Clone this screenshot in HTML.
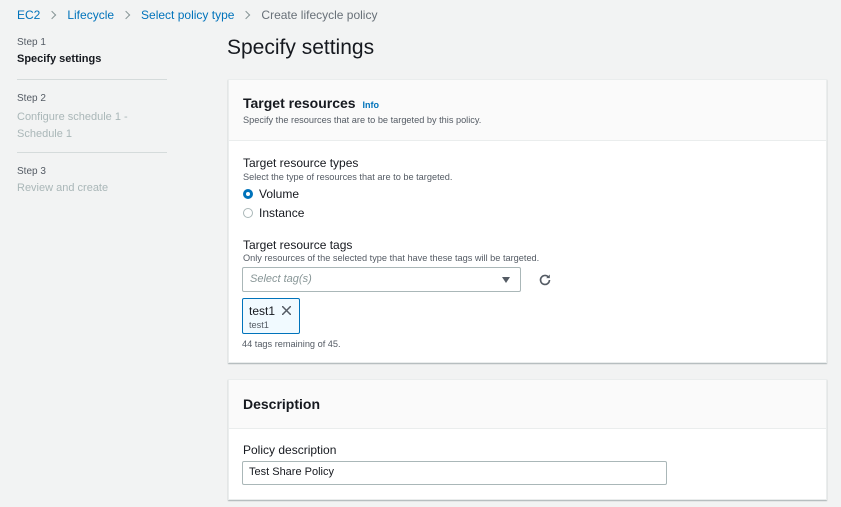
<!DOCTYPE html>
<html><head><style>
*{box-sizing:border-box;margin:0;padding:0}
body{width:841px;height:507px;background:#f2f3f3;font-family:"Liberation Sans",sans-serif;color:#16191f;position:relative;overflow:hidden}
.a{position:absolute;white-space:nowrap}
.bc{font-size:12px;top:8px}
.blue{color:#0073bb}
.gray{color:#687078}
.card{position:absolute;left:228px;width:599px;background:#fff;border:1px solid #eaeded;box-shadow:0 1px 1px rgba(0,28,36,.3)}
.hdr{background:#fafafa;border-bottom:1px solid #eaeded}
.sm{font-size:9.2px;color:#545b64}
.lbl{font-size:12px}
.chev{display:inline-block;width:6px;height:6px;border-top:1.2px solid #879596;border-right:1.2px solid #879596;transform:rotate(45deg);margin:0 12px 1px 9px}
</style></head><body>
<div class="a bc" style="left:17px"><span class="blue">EC2</span><span class="chev"></span><span class="blue">Lifecycle</span><span class="chev"></span><span class="blue">Select policy type</span><span class="chev"></span><span class="gray">Create lifecycle policy</span></div>

<div class="a" style="left:17px;top:37px;font-size:10px;color:#545b64">Step 1</div>
<div class="a" style="left:17px;top:53px;font-size:11px;font-weight:bold">Specify settings</div>
<div class="a" style="left:17px;top:79px;width:150px;border-top:1px solid #d5dbdb"></div>
<div class="a" style="left:17px;top:93px;font-size:10px;color:#545b64">Step 2</div>
<div class="a" style="left:17px;top:109px;font-size:11px;color:#aab7b8;line-height:17px">Configure schedule 1 -<br>Schedule 1</div>
<div class="a" style="left:17px;top:152px;width:150px;border-top:1px solid #d5dbdb"></div>
<div class="a" style="left:17px;top:166px;font-size:10px;color:#545b64">Step 3</div>
<div class="a" style="left:17px;top:182px;font-size:11px;color:#aab7b8">Review and create</div>

<div class="a" style="left:227px;top:36px;font-size:21px">Specify settings</div>

<div class="card" style="top:79px;height:284px">
 <div class="hdr" style="height:61px"></div>
 <div class="a" style="left:14px;top:15px;font-size:14px;font-weight:bold">Target resources <span class="blue" style="font-size:9px;margin-left:3px">Info</span></div>
 <div class="a sm" style="left:14px;top:35px">Specify the resources that are to be targeted by this policy.</div>
 <div class="a lbl" style="left:14px;top:76px">Target resource types</div>
 <div class="a sm" style="left:14px;top:92px">Select the type of resources that are to be targeted.</div>
 <div class="a" style="left:14px;top:109px;width:10px;height:10px;border-radius:50%;border:3px solid #0073bb"></div>
 <div class="a lbl" style="left:30px;top:107px">Volume</div>
 <div class="a" style="left:14px;top:128px;width:10px;height:10px;border-radius:50%;border:1px solid #aab7b8"></div>
 <div class="a lbl" style="left:30px;top:126px">Instance</div>
 <div class="a lbl" style="left:14px;top:158px">Target resource tags</div>
 <div class="a sm" style="left:14px;top:173px">Only resources of the selected type that have these tags will be targeted.</div>
 <div class="a" style="left:13px;top:187px;width:279px;height:25px;border:1px solid #aab7b8;border-radius:2px"></div>
 <div class="a" style="left:21px;top:193px;font-size:11px;font-style:italic;color:#879596">Select tag(s)</div>
 <div class="a" style="left:273px;top:197px;width:0;height:0;border-left:4px solid transparent;border-right:4px solid transparent;border-top:6px solid #545b64"></div>
 <svg class="a" style="left:309px;top:193px" width="14" height="14" viewBox="0 0 14 14"><path d="M11.5 7a4.5 4.5 0 1 1-1.3-3.2" fill="none" stroke="#545b64" stroke-width="1.6"/><path d="M11.8 1.5v3.6H8.2z" fill="#545b64"/></svg>
 <div class="a" style="left:13px;top:218px;width:58px;height:36px;border:1px solid #0073bb;background:#f1faff;border-radius:2px"></div>
 <div class="a lbl" style="left:20px;top:224px">test1</div>
 <svg class="a" style="left:53px;top:226px" width="9" height="9"><path d="M0 0L9 9M9 0L0 9" stroke="#545b64" stroke-width="1.5"/></svg>
 <div class="a sm" style="left:20px;top:240px">test1</div>
 <div class="a sm" style="left:13px;top:259px">44 tags remaining of 45.</div>
</div>

<div class="card" style="top:379px;height:121px">
 <div class="hdr" style="height:49px"></div>
 <div class="a" style="left:14px;top:16px;font-size:14px;font-weight:bold">Description</div>
 <div class="a lbl" style="left:14px;top:63px">Policy description</div>
 <div class="a" style="left:13px;top:81px;width:425px;height:24px;border:1px solid #aab7b8;border-radius:2px"></div>
 <div class="a" style="left:20px;top:86px;font-size:11px">Test Share Policy</div>
</div>
</body></html>
